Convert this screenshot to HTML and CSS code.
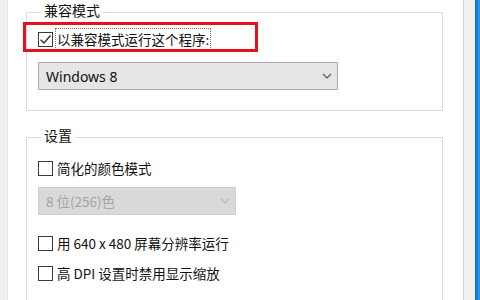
FILE: index.html
```html
<!DOCTYPE html>
<html>
<head>
  <meta charset="utf-8">
  <title>兼容性</title>
<link rel="stylesheet" href="styles.css"></head>
<body>

  <div class="window">
    <div class="edge"></div>
    <div class="panel">

      <fieldset class="group">
        <legend>兼容模式</legend>
        <div class="row">
          <span class="box checked">
            <svg width="13" height="13" viewBox="0 0 12 12"><path d="M1.5 6.2 L4.6 9.2 L10.6 2.4" fill="none" stroke="#333" stroke-width="1.4"/></svg>
          </span>
          <span class="label focus">以兼容模式运行这个程序:</span>
        </div>
        <div class="select">
          <span>Windows 8</span>
          <svg width="10" height="6" viewBox="0 0 10 6"><path d="M1 1 L5 5 L9 1" fill="none" stroke="#555" stroke-width="1.2"/></svg>
        </div>
        <div class="mark"></div>
      </fieldset>

      <fieldset class="group second">
        <legend>设置</legend>
        <div class="row">
          <span class="box"></span>
          <span class="label">简化的颜色模式</span>
        </div>
        <div class="select disabled">
          <span>8 位(256)色</span>
          <svg width="10" height="6" viewBox="0 0 10 6"><path d="M1 1 L5 5 L9 1" fill="none" stroke="#b8b8b8" stroke-width="1.2"/></svg>
        </div>
        <div class="row spaced">
          <span class="box"></span>
          <span class="label">用 640 x 480 屏幕分辨率运行</span>
        </div>
        <div class="row">
          <span class="box"></span>
          <span class="label">高 DPI 设置时禁用显示缩放</span>
        </div>
      </fieldset>

    </div>
    <div class="side"></div>
    <div class="desktop"></div>
  </div>

</body>
</html>
```

FILE: styles.css
```css
body {
  margin: 0;
  font-family: "Noto Sans", "Noto Sans CJK SC", sans-serif;
  font-size: 13.5px;
  color: #111;
  background-color: #fff;
}

.window {
  display: flex;
  width: 480px;
  height: 300px;
  overflow: hidden;
}

.edge {
  width: 7px;
  background-color: #f0f0f0;
  border-right: 1px solid #e4e4e4;
}

.panel {
  flex: 1;
  background-color: #fff;
  padding: 2px 20px 0 18px;
}

.side {
  width: 11px;
  background-color: #f0f0f0;
  border-left: 1px solid #d6d6d6;
}

.desktop {
  width: 5px;
  background: linear-gradient(to right, #1565c0 0, #1e7fe0 2px, #2a98f0 100%);
}

.group {
  position: relative;
  margin: 0;
  border: 1px solid #dcdcdc;
  padding: 6px 11px 20px 11px;
}

.group legend {
  padding: 0 3px 4px 3px;
  margin-left: 3px;
  line-height: 16px;
  font-size: 14px;
  font-family: "Noto Sans CJK SC", sans-serif;
}

.second {
  margin-top: 16px;
  padding-top: 10px;
}

.row {
  display: flex;
  align-items: center;
  height: 22px;
  gap: 3px;
}

.row + .row {
  margin-top: 8px;
}

.row.spaced {
  margin-top: 17px;
}

.box {
  width: 15px;
  height: 15px;
  box-sizing: border-box;
  border: 1px solid #3a3a3a;
  display: flex;
  align-items: center;
  justify-content: center;
  background-color: #fff;
}

.label {
  padding: 1px 1px;
  line-height: 18px;
  font-family: "Noto Sans CJK SC", sans-serif;
}

.focus {
  outline: 1px dotted #777;
}

.select {
  display: flex;
  align-items: center;
  justify-content: space-between;
  width: 300px;
  height: 28px;
  box-sizing: border-box;
  margin-top: 12px;
  padding: 0 5px 0 7px;
  background-color: #e5e5e5;
  border: 1px solid #adadad;
  font-size: 14px;
}

.disabled {
  width: 198px;
  margin-top: 8px;
  background-color: #d9d9d9;
  border-color: #cfcfcf;
  color: #a3a3a3;
  font-family: "Noto Sans CJK SC", sans-serif;
  font-size: 13.5px;
}

.mark {
  position: absolute;
  left: -4px;
  top: 0;
  width: 229px;
  height: 24px;
  border: 3px solid #e3131b;
}
```
